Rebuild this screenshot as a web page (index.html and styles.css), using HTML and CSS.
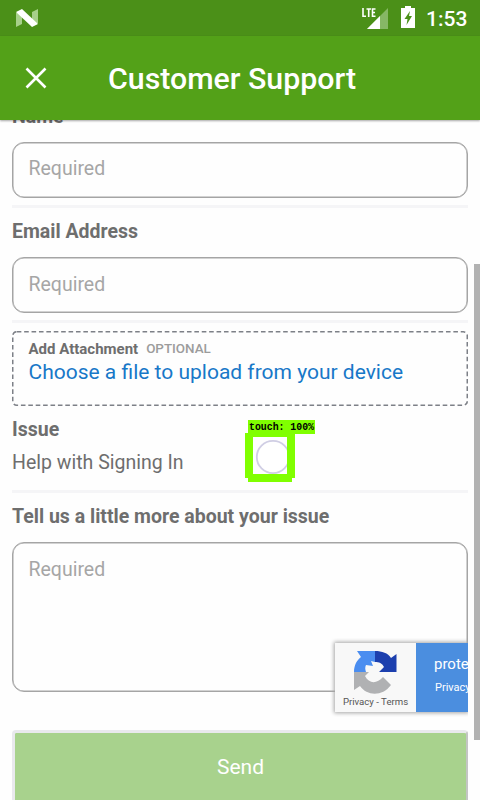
FILE: index.html
```html
<!DOCTYPE html>
<html lang="en">
<head>
<meta charset="utf-8">
<title>Customer Support</title>
<link rel="stylesheet" href="styles.css">
</head>
<body>
<div class="statusbar">
  <svg class="os-logo" width="22" height="19" viewBox="0 0 22 19">
    <path d="M0 4L6 1V15L0 18Z" fill="#a7d08a"/>
    <path d="M16 3L22 0V14L16 17Z" fill="#a7d08a"/>
    <path d="M0 3L6 0L22 15L16 18Z" fill="#fff"/>
  </svg>
  <div class="system">
    <svg width="28" height="23" viewBox="0 0 28 23">
      <path d="M27 1V22H6Z" fill="#86b765"/>
      <path d="M19 9V22H6Z" fill="#fff"/>
      <path d="M2 1V9.2H5M5.5 2H10M7.7 2V10M14.5 2H11.5V9.2H14.5M11.5 5.5H14" fill="none" stroke="#fff" stroke-width="1.6"/>
    </svg>
    <svg class="battery" width="14" height="22" viewBox="0 0 14 22">
      <path d="M4 0H10V2H14V22H0V2H4ZM9 5L3.5 13H6.5L5.5 19L11 10H8Z" fill="#fff" fill-rule="evenodd"/>
    </svg>
    <span class="clock">1:53</span>
  </div>
</div>
<header class="appbar">
  <svg class="close" width="22" height="22" viewBox="0 0 22 22"><path d="M1.5 1.5L20.5 20.5M20.5 1.5L1.5 20.5" stroke="#fff" stroke-width="2.6"/></svg>
  <h1>Customer Support</h1>
</header>
<main>
  <form>
    <section class="field">
      <label for="name">Name</label>
      <input id="name" placeholder="Required">
    </section>
    <section class="field">
      <label for="email">Email Address</label>
      <input id="email" class="email" placeholder="Required">
    </section>
    <section class="attach">
      <svg class="outline" width="456" height="75"><rect x=".75" y=".75" width="454.5" height="73.5" rx="4" fill="none" stroke="#7d8087" stroke-width="1.5" stroke-dasharray="4.6 2.8"/></svg>
      <div class="attach-title"><b>Add Attachment</b><span class="optional">OPTIONAL</span></div>
      <a class="choose">Choose a file to upload from your device</a>
    </section>
    <section class="issue">
      <label>Issue</label>
      <p>Help with Signing In</p>
    </section>
    <section class="details">
      <label for="more">Tell us a little more about your issue</label>
      <textarea id="more" placeholder="Required"></textarea>
    </section>
    <button class="send" type="button">Send</button>
  </form>
</main>
<div class="scroll-thumb"></div>
<div class="touch">
  <div class="touch-label"><svg width="67" height="14"><text x="1" y="10" textLength="65" lengthAdjust="spacingAndGlyphs">touch: 100%</text></svg></div>
  <svg class="touch-box" width="50" height="49" viewBox="0 0 50 49">
    <circle cx="28" cy="24" r="16.2" fill="#fff" stroke="#d0cee4" stroke-width="1.8"/>
    <path d="M3 0H50V45H47V49H3V45H0V0ZM8 4V41H42V4Z" fill="#80ff00" fill-rule="evenodd"/>
  </svg>
</div>
<aside class="captcha">
  <div class="captcha-logo">
    <svg width="44" height="44" viewBox="0 0 44 44">
      <path d="M1 22C1 15 4 10 8 7L4 1H22V12L18 11L20 16L13 15C12 17 12 19 13 22Z" fill="#4a8df0"/>
      <path d="M22 1C29 1 35 3 38 8L43.5 4V22H26L31 17C29 13 26 12 22 12Z" fill="#1c3fae"/>
      <path d="M1 22H16L12 26C16 34 24 34 30 27L38 35C29 47 14 46 7 36L1 40Z" fill="#b0b1b3"/>
    </svg>
    <span>Privacy - Terms</span>
  </div>
  <div class="captcha-info"><span class="protected">protected by reCAPTCHA</span><span class="terms">Privacy - Terms</span></div>
</aside>
</body>
</html>
```
FILE: styles.css
```css
* { box-sizing: border-box; }
body {
  margin: 0;
  width: 480px;
  height: 800px;
  overflow: hidden;
  position: relative;
  display: flex;
  flex-direction: column;
  background: #fefefe;
  color: #6e6e6e;
  font-family: Roboto, "Liberation Sans", sans-serif;
}
.statusbar {
  flex: none;
  height: 36px;
  padding: 0 12px 0 16px;
  display: flex;
  align-items: center;
  justify-content: space-between;
  background: #4b9018;
  color: #fff;
}
.system { display: flex; align-items: center; }
.battery { margin: -2px 11px 0 12px; }
.clock { font-size: 21px; font-weight: 500; line-height: 36px; padding-top: 2px; width: 42px; white-space: nowrap; }
.appbar {
  flex: none;
  z-index: 1;
  height: 84px;
  padding-left: 25px;
  display: flex;
  align-items: center;
  background: #53a118;
  box-shadow: 0 1px 2px rgba(0, 0, 0, .35);
  color: #fff;
}
.appbar h1 { margin: 2px 0 0 61px; font-size: 30.3px; line-height: 36px; font-weight: 500; white-space: nowrap; }
main { flex: 1; overflow: hidden; padding: 0 12px; }
form { margin-top: -20px; }
label { display: block; height: 32px; padding-top: 2px; line-height: 30px; font-size: 19.5px; font-weight: 700; white-space: nowrap; }
.field { border-bottom: 3px solid #f5f5f7; padding-bottom: 7.5px; margin-bottom: 7px; }
input, textarea {
  display: block;
  width: 100%;
  margin: 9.5px 0 0;
  padding: 0 15.5px;
  border: 1px solid #a5a5a5;
  box-shadow: inset 0 0 0 .5px #a5a5a5;
  border-radius: 12px;
  background: transparent;
  font: 400 19.5px/24px Roboto, sans-serif;
  resize: none;
  outline: 0;
}
input { height: 56px; padding-bottom: 3px; }
.email { padding-bottom: 1px; }
textarea { height: 150px; padding-top: 15px; }
::placeholder { color: #a6a6a6; opacity: 1; }
.attach {
  position: relative;
  height: 75px;
  margin-top: 8px;
  padding: 8px 16.5px;
  white-space: nowrap;
}
.outline { position: absolute; left: 0; top: 0; }
.attach-title { display: flex; gap: 8px; font-size: 15px; line-height: 20px; }
.optional { font-size: 13.4px; font-weight: 500; color: #9c9c9c; }
.choose { display: block; font-size: 21px; line-height: 25px; color: #1878c8; margin-top: 1px; }
.issue { height: 87px; padding-top: 7px; border-bottom: 3px solid #f5f5f7; }
.issue p { margin: 5px 0 0; font-size: 19.5px; line-height: 26px; }
.details { padding-top: 7px; }
.send {
  display: block;
  width: 100%;
  height: 74px;
  margin-top: 38px;
  border: 3px solid #e9e9ed;
  border-right: 2px solid #c3c5c3;
  border-radius: 4px;
  background: #a8d28d;
  color: #fff;
  font: 400 21px Roboto, sans-serif;
}
.scroll-thumb { position: absolute; left: 474px; top: 264px; width: 6px; height: 476px; background: #b2b2b2; }
.touch { position: absolute; left: 245px; top: 420px; }
.touch-label { margin-left: 3px; width: 67px; height: 14px; background: #80ff00; }
.touch-label svg { display: block; }
.touch-label text { font: 700 10px "Liberation Mono", monospace; fill: #000; }
.touch-box { display: block; margin-top: -1px; }
.captcha {
  position: absolute;
  left: 335px;
  top: 643px;
  width: 133px;
  height: 69px;
  display: flex;
  background: #f8f8f8;
  box-shadow: 0 0 4px 1px #a5a5a5;
  clip-path: inset(-5px 0 -5px -5px);
  overflow: hidden;
}
.captcha-logo { flex: none; width: 81px; display: flex; flex-direction: column; align-items: center; padding-top: 7px; font-size: 9.6px; line-height: 16px; color: #555; white-space: nowrap; }
.captcha-logo svg { margin-left: -2px; }
.captcha-info { flex: none; width: 160px; padding: 11px 0 0 18px; display: flex; flex-direction: column; background: #4b8edf; color: #fff; white-space: nowrap; }
.protected { font-size: 15px; line-height: 20px; }
.terms { padding: 6px 0 0 1px; font-size: 11px; line-height: 16px; }
```
